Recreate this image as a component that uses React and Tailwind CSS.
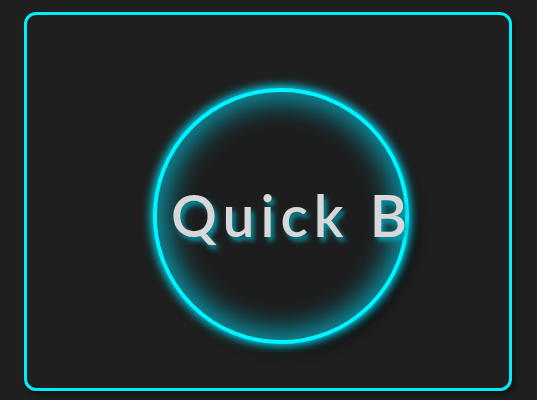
export default function App() {
  return (
    <div className="w-[537px] h-[400px] bg-[#1f1f1f] pt-[12px] pl-[24px]">
      {/* Frame */}
      <div className="w-[488px] h-[379px] rounded-[12px] border-[3px] border-[#00eefc] shadow-[3px_3px_4px_rgba(0,0,0,0.5)] flex items-center justify-center pl-[26px] pt-[28px]">
        {/* Glow ring */}
        <div className="w-[256px] h-[256px] rounded-full border-[4px] border-[#00f4ff] bg-[#1d1d1d] flex items-center justify-center shadow-[0_0_10px_2px_#00e5ff,inset_0_0_28px_8px_rgba(0,210,235,0.7),8px_8px_12px_rgba(0,0,0,0.55)]">
          <span
            className="text-[#d8d8d8] text-[57px] font-semibold tracking-[6px] pl-[22px] whitespace-nowrap [text-shadow:3px_4px_5px_rgba(0,170,190,0.85)]"
            style={{ fontFamily: "'Comic Sans MS', 'Lato', 'DejaVu Sans', sans-serif" }}
          >
            Quick B
          </span>
        </div>
      </div>
    </div>
  );
}
